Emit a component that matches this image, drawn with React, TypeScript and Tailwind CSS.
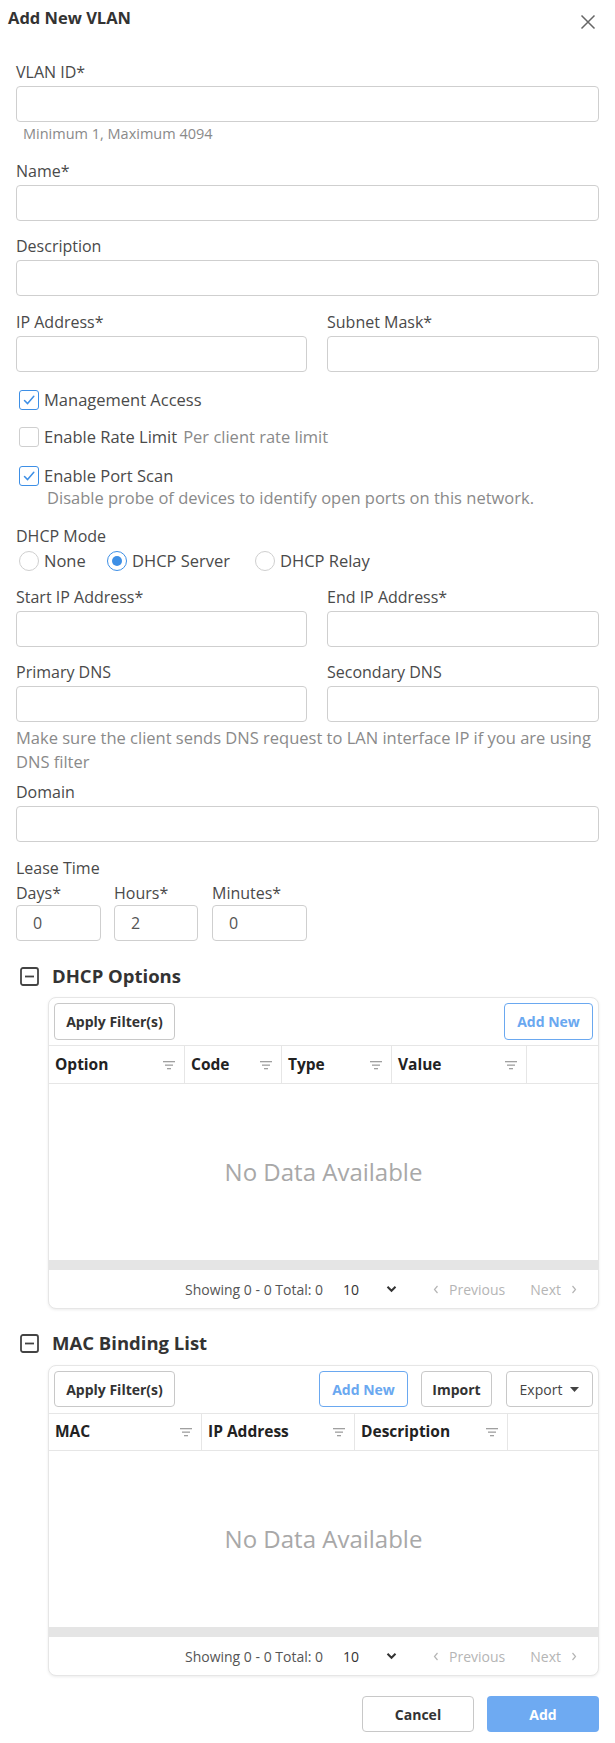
import React from "react";

const font = "font-['Open_Sans','Liberation_Sans',sans-serif]";

function Label({ children }: { children: React.ReactNode }) {
  return <div className="mb-1 text-[16px] leading-5 text-[#4a4a4a]">{children}</div>;
}

function TextInput({ value = "", className = "" }: { value?: string; className?: string }) {
  return (
    <div
      className={`flex h-9 items-center rounded-[4px] border border-[#cfcfcf] bg-white pl-4 text-[16px] text-[#555] ${className}`}
    >
      {value}
    </div>
  );
}

function Field({ label, className = "" }: { label: string; className?: string }) {
  return (
    <div className={className}>
      <Label>{label}</Label>
      <TextInput />
    </div>
  );
}

function Checkbox({ checked }: { checked: boolean }) {
  return (
    <span
      className={`flex h-5 w-5 shrink-0 items-center justify-center rounded-[3px] border bg-white ${
        checked ? "border-[#3d8fe6]" : "border-[#cfcfcf]"
      }`}
    >
      {checked && (
        <svg width="14" height="14" viewBox="0 0 14 14" fill="none">
          <path d="M2.5 7.5 L5.6 10.6 L11.8 3.2" stroke="#3d8fe6" strokeWidth="1.5" strokeLinecap="round" strokeLinejoin="round" />
        </svg>
      )}
    </span>
  );
}

function Radio({ checked, label, className = "" }: { checked: boolean; label: string; className?: string }) {
  return (
    <div className={`flex items-center ${className}`}>
      <span
        className={`flex h-5 w-5 shrink-0 items-center justify-center rounded-full border bg-white ${
          checked ? "border-[#3d8fe6]" : "border-[#cfcfcf]"
        }`}
      >
        {checked && <span className="h-[10px] w-[10px] rounded-full bg-[#3d8fe6]" />}
      </span>
      <span className="ml-[5px] text-[16.5px] leading-5 text-[#4a4a4a]">{label}</span>
    </div>
  );
}

function FilterIcon() {
  return (
    <svg width="12" height="10" viewBox="0 0 12 10" className="shrink-0">
      <rect x="0" y="1" width="12" height="1.3" fill="#a0a0a0" />
      <rect x="2" y="4.5" width="8" height="1.3" fill="#a0a0a0" />
      <rect x="4" y="8" width="4" height="1.3" fill="#a0a0a0" />
    </svg>
  );
}

function MinusBox() {
  return (
    <svg width="19" height="19" viewBox="0 0 19 19" className="shrink-0">
      <rect x="1" y="1" width="17" height="17" rx="2" fill="none" stroke="#444" strokeWidth="1.8" />
      <rect x="5" y="8.6" width="9" height="1.8" fill="#444" />
    </svg>
  );
}

function SectionHeader({ title }: { title: string }) {
  return (
    <div className="flex h-6 items-center">
      <span className="ml-1">
        <MinusBox />
      </span>
      <span className="ml-[13px] text-[18.5px] font-bold leading-6 text-[#333]">{title}</span>
    </div>
  );
}

function ToolButton({
  children,
  variant = "default",
  className = "",
}: {
  children: React.ReactNode;
  variant?: "default" | "primary" | "plain";
  className?: string;
}) {
  const styles =
    variant === "primary"
      ? "border-[#6aa8f0] text-[#6aa8f0] font-bold"
      : variant === "plain"
        ? "border-[#c8c8c8] text-[#444] font-normal"
        : "border-[#c8c8c8] text-[#333] font-bold";
  return (
    <div
      className={`flex items-center justify-center rounded-[4px] border bg-white text-[14px] ${styles} ${className}`}
    >
      {children}
    </div>
  );
}

function Pager() {
  return (
    <div className="flex h-[38px] items-center justify-end pr-[21px] text-[14px]">
      <span className="text-[#555]">Showing 0 - 0 Total: 0</span>
      <span className="ml-[20px] text-[#333]">10</span>
      <svg width="11" height="8" viewBox="0 0 11 8" className="ml-[27px]">
        <path d="M1.5 1.8 L5.5 5.8 L9.5 1.8" stroke="#333" strokeWidth="2" fill="none" />
      </svg>
      <svg width="6" height="9" viewBox="0 0 6 9" className="ml-[36px]">
        <path d="M4.5 1 L1.5 4.5 L4.5 8" stroke="#b5b5b5" strokeWidth="1.2" fill="none" />
      </svg>
      <span className="ml-[10px] text-[#b5b5b5]">Previous</span>
      <span className="ml-[25px] text-[#b5b5b5]">Next</span>
      <svg width="6" height="9" viewBox="0 0 6 9" className="ml-[10px]">
        <path d="M1.5 1 L4.5 4.5 L1.5 8" stroke="#b5b5b5" strokeWidth="1.2" fill="none" />
      </svg>
    </div>
  );
}

function DataTable({
  columns,
  template,
  toolbar,
  toolbarClass,
  headerClass,
}: {
  columns: string[];
  template: string;
  toolbar: React.ReactNode;
  toolbarClass: string;
  headerClass: string;
}) {
  return (
    <div className="ml-8 overflow-hidden rounded-lg border border-[#e6e6e6] bg-white shadow-[0_1px_3px_rgba(0,0,0,0.08)]">
      <div className={`flex items-center ${toolbarClass}`}>{toolbar}</div>
      <div className={`grid border-y border-[#e6e6e6] ${template} ${headerClass}`}>
        {columns.map((c) => (
          <div key={c} className="flex items-center justify-between border-r border-[#e6e6e6] pl-[6px] pr-[9px]">
            <span className="text-[15.5px] font-bold text-[#222]">{c}</span>
            <FilterIcon />
          </div>
        ))}
        <div />
      </div>
      <div className="flex h-[176px] items-center justify-center text-[24px] text-[#a8a8a8]">
        No Data Available
      </div>
      <div className="h-[10px] bg-[#e5e5e5]" />
      <Pager />
    </div>
  );
}

export default function App() {
  return (
    <div className={`min-h-[1743px] w-[615px] bg-white ${font}`}>
      <div className="flex h-[62px] items-start justify-between pl-2 pr-[19px] pt-[6px]">
        <h2 className="text-[16.5px] font-bold leading-6 text-[#333]">Add New VLAN</h2>
        <svg width="16" height="16" viewBox="0 0 16 16" className="mt-[8px]">
          <path d="M1.5 1.5 L14.5 14.5 M14.5 1.5 L1.5 14.5" stroke="#666" strokeWidth="1.5" />
        </svg>
      </div>

      <div className="px-4 pb-[14px]">
        <Field label="VLAN ID*" />
        <div className="mt-[2px] pl-[7px] text-[14.5px] leading-5 text-[#8a8a8a]">Minimum 1, Maximum 4094</div>

        <Field label="Name*" className="mt-[17px]" />
        <Field label="Description" className="mt-[15px]" />

        <div className="mt-4 grid grid-cols-[291px_272px] gap-x-5">
          <Field label="IP Address*" />
          <Field label="Subnet Mask*" />
        </div>

        <div className="mt-[18px] flex h-5 items-center pl-[3px]">
          <Checkbox checked />
          <span className="ml-[5px] text-[16.5px] text-[#4a4a4a]">Management Access</span>
        </div>
        <div className="mt-[17px] flex h-5 items-center pl-[3px]">
          <Checkbox checked={false} />
          <span className="ml-[5px] text-[16.5px] text-[#4a4a4a]">Enable Rate Limit</span>
          <span className="ml-[6px] text-[16.5px] text-[#8a8a8a]">Per client rate limit</span>
        </div>
        <div className="mt-[19px] flex h-5 items-center pl-[3px]">
          <Checkbox checked />
          <span className="ml-[5px] text-[16.5px] text-[#4a4a4a]">Enable Port Scan</span>
        </div>
        <div className="mt-[2px] pl-[31px] text-[16.5px] leading-5 text-[#8a8a8a]">
          Disable probe of devices to identify open ports on this network.
        </div>

        <div className="mt-[18px] text-[16px] leading-5 text-[#4a4a4a]">DHCP Mode</div>
        <div className="mt-[5px] flex items-center pl-[3px]">
          <Radio checked={false} label="None" className="w-[88px]" />
          <Radio checked label="DHCP Server" className="w-[148px]" />
          <Radio checked={false} label="DHCP Relay" />
        </div>

        <div className="mt-4 grid grid-cols-[291px_272px] gap-x-5">
          <Field label="Start IP Address*" />
          <Field label="End IP Address*" />
        </div>
        <div className="mt-[15px] grid grid-cols-[291px_272px] gap-x-5">
          <Field label="Primary DNS" />
          <Field label="Secondary DNS" />
        </div>
        <div className="mt-1 text-[16.5px] leading-6 text-[#8a8a8a]">
          Make sure the client sends DNS request to LAN interface IP if you are using
          <br />
          DNS filter
        </div>

        <Field label="Domain" className="mt-2" />

        <div className="mt-4 text-[16px] leading-5 text-[#4a4a4a]">Lease Time</div>
        <div className="mt-[5px] flex">
          <div className="w-[85px]">
            <div className="mb-[2px] text-[16px] leading-5 text-[#4a4a4a]">Days*</div>
            <TextInput value="0" />
          </div>
          <div className="ml-[13px] w-[84px]">
            <div className="mb-[2px] text-[16px] leading-5 text-[#4a4a4a]">Hours*</div>
            <TextInput value="2" />
          </div>
          <div className="ml-[14px] w-[95px]">
            <div className="mb-[2px] text-[16px] leading-5 text-[#4a4a4a]">Minutes*</div>
            <TextInput value="0" />
          </div>
        </div>

        <div className="mt-[23px]">
          <SectionHeader title="DHCP Options" />
        </div>
        <div className="mt-[9px]">
          <DataTable
            columns={["Option", "Code", "Type", "Value"]}
            template="grid-cols-[136px_97px_110px_135px_1fr]"
            toolbarClass="justify-between p-[5px]"
            headerClass="h-[39px]"
            toolbar={
              <>
                <ToolButton className="h-[37px] w-[121px]">Apply Filter(s)</ToolButton>
                <ToolButton variant="primary" className="h-[37px] w-[89px]">
                  Add New
                </ToolButton>
              </>
            }
          />
        </div>

        <div className="mt-[22px]">
          <SectionHeader title="MAC Binding List" />
        </div>
        <div className="mt-[10px]">
          <DataTable
            columns={["MAC", "IP Address", "Description"]}
            template="grid-cols-[153px_153px_153px_1fr]"
            toolbarClass="p-[5px] pb-[6px]"
            headerClass="h-[38px]"
            toolbar={
              <>
                <ToolButton className="h-9 w-[121px]">Apply Filter(s)</ToolButton>
                <ToolButton variant="primary" className="ml-auto h-9 w-[89px]">
                  Add New
                </ToolButton>
                <ToolButton className="ml-[13px] h-9 w-[71px]">Import</ToolButton>
                <ToolButton variant="plain" className="ml-[14px] h-9 w-[87px]">
                  Export
                  <svg width="9" height="5" viewBox="0 0 9 5" className="ml-[8px]">
                    <path d="M0 0 L9 0 L4.5 5 Z" fill="#444" />
                  </svg>
                </ToolButton>
              </>
            }
          />
        </div>

        <div className="mt-5 flex justify-end gap-[13px]">
          <div className="flex h-9 w-[112px] items-center justify-center rounded-[4px] border border-[#c8c8c8] bg-white text-[14px] font-bold text-[#333]">
            Cancel
          </div>
          <div className="flex h-9 w-[112px] items-center justify-center rounded-[4px] bg-[#6eaaf2] text-[14px] font-bold text-white">
            Add
          </div>
        </div>
      </div>
    </div>
  );
}
